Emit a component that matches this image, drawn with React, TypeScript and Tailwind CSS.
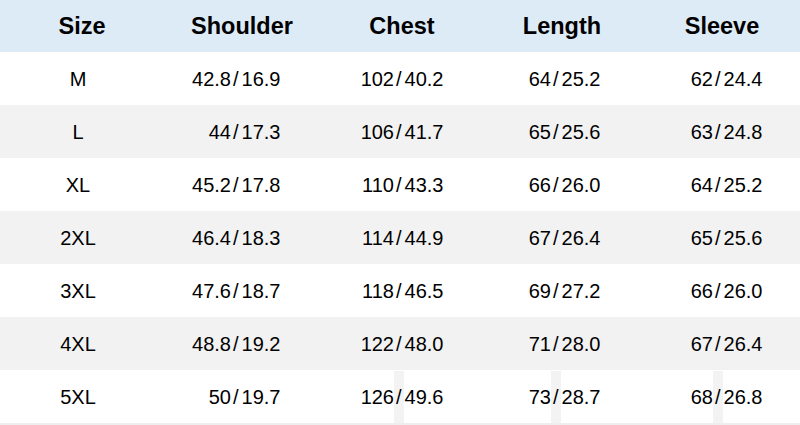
const headers = ["Size", "Shoulder", "Chest", "Length", "Sleeve"];

const rows: [string, string[], string[], string[], string[]][] = [
  ["M", ["42.8", "16.9"], ["102", "40.2"], ["64", "25.2"], ["62", "24.4"]],
  ["L", ["44", "17.3"], ["106", "41.7"], ["65", "25.6"], ["63", "24.8"]],
  ["XL", ["45.2", "17.8"], ["110", "43.3"], ["66", "26.0"], ["64", "25.2"]],
  ["2XL", ["46.4", "18.3"], ["114", "44.9"], ["67", "26.4"], ["65", "25.6"]],
  ["3XL", ["47.6", "18.7"], ["118", "46.5"], ["69", "27.2"], ["66", "26.0"]],
  ["4XL", ["48.8", "19.2"], ["122", "48.0"], ["71", "28.0"], ["67", "26.4"]],
  ["5XL", ["50", "19.7"], ["126", "49.6"], ["73", "28.7"], ["68", "26.8"]],
];

const leftWidths = ["w-[71px]", "w-[74px]", "w-[71px]", "w-[73px]"];

function Pair({ v, col, last }: { v: string[]; col: number; last: boolean }) {
  const strip = last && col > 0 ? "bg-[#f3f3f3]" : "";
  return (
    <div className="flex h-full items-stretch">
      <span className={`${leftWidths[col]} flex items-center justify-end`}>{v[0]}</span>
      <span className={`flex items-center px-[2px] ${strip}`}>/</span>
      <span className="flex items-center pl-[1px]">{v[1]}</span>
    </div>
  );
}

export default function App() {
  return (
    <div className="h-[425px] w-[800px] bg-white text-black" style={{ fontFamily: '"Liberation Sans", Arial, sans-serif' }}>
      <div className="grid h-[52px] grid-cols-[160px_160px_160px_160px_160px] items-center bg-[#ddebf7] pt-[2px] text-[23.5px] font-bold">
        {headers.map((h) => (
          <div key={h} className="pl-[4px] text-center">
            {h}
          </div>
        ))}
      </div>
      {rows.map((r, i) => (
        <div
          key={r[0]}
          className={`grid h-[53px] grid-cols-[160px_160px_160px_160px_160px] pt-[1px] text-[20px] ${
            i % 2 === 1 ? "bg-[#f2f2f2]" : "bg-white"
          }`}
        >
          <div className="flex items-center justify-center pr-[4px]">{r[0]}</div>
          {[r[1], r[2], r[3], r[4]].map((v, c) => (
            <Pair key={c} v={v} col={c} last={i === rows.length - 1} />
          ))}
        </div>
      ))}
      <div className="h-[2px] bg-[#eeeeee]" />
    </div>
  );
}
